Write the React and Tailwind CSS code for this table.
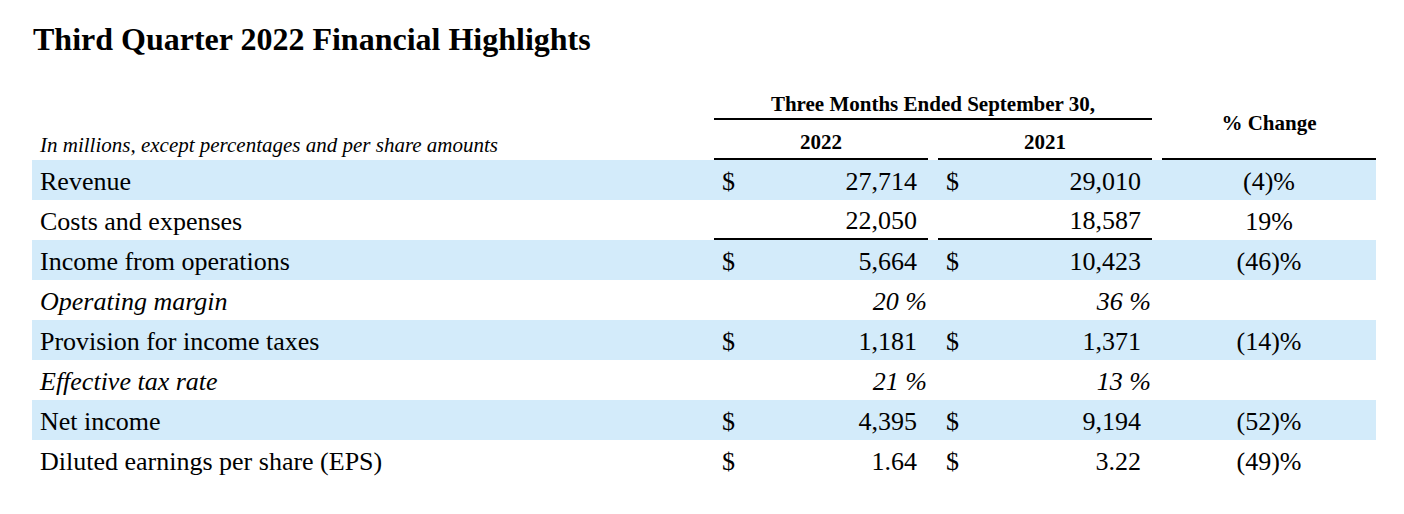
import React from "react";

const rows = [
  { label: "Revenue", a: "27,714", b: "29,010", chg: "(4)%", dollar: true, blue: true },
  { label: "Costs and expenses", a: "22,050", b: "18,587", chg: "19%", line: true },
  { label: "Income from operations", a: "5,664", b: "10,423", chg: "(46)%", dollar: true, blue: true },
  { label: "Operating margin", a: "20 %", b: "36 %", chg: "", italic: true },
  { label: "Provision for income taxes", a: "1,181", b: "1,371", chg: "(14)%", dollar: true, blue: true },
  { label: "Effective tax rate", a: "21 %", b: "13 %", chg: "", italic: true },
  { label: "Net income", a: "4,395", b: "9,194", chg: "(52)%", dollar: true, blue: true },
  { label: "Diluted earnings per share (EPS)", a: "1.64", b: "3.22", chg: "(49)%", dollar: true },
];

const ValueCell = ({ row, value }) => (
  <div
    className={`w-[214px] h-full flex items-center justify-between pl-[8px] pt-[3px] ${
      row.italic ? "pr-[1px] italic" : "pr-[11px]"
    } ${row.line ? "border-b-2 border-black" : ""}`}
  >
    <span>{row.dollar ? "$" : ""}</span>
    <span>{value}</span>
  </div>
);

export default function App() {
  return (
    <div className="w-[1404px] h-[514px] bg-white text-black font-['Liberation_Serif',serif]">
      <h1 className="pl-[33px] pt-[20px] h-[90px] text-[32px] font-bold leading-[38px]">
        Third Quarter 2022 Financial Highlights
      </h1>

      <div className="ml-[32px] w-[1344px]">
        {/* header */}
        <div className="flex h-[70px]">
          <div className="w-[682px] flex items-end pl-[8px] pb-[3px] italic text-[21px] leading-[24px]">
            In millions, except percentages and per share amounts
          </div>
          <div className="w-[438px] flex flex-col font-bold text-[21px]">
            <div className="h-[30px] flex items-center justify-center border-b-2 border-black leading-none">
              Three Months Ended September 30,
            </div>
            <div className="flex h-[40px]">
              <div className="w-[214px] flex items-end justify-center pb-[5px] border-b-2 border-black leading-none">
                2022
              </div>
              <div className="w-[10px]" />
              <div className="w-[214px] flex items-end justify-center pb-[5px] border-b-2 border-black leading-none">
                2021
              </div>
            </div>
          </div>
          <div className="w-[10px]" />
          <div className="w-[214px] flex items-center justify-center pb-[2px] border-b-2 border-black font-bold text-[21px] leading-none">
            % Change
          </div>
        </div>

        {/* body */}
        {rows.map((row, id) => (
          <div
            key={id}
            className={`flex h-[40px] items-center text-[26px] leading-none ${
              row.blue ? "bg-[#d3ebfa]" : ""
            }`}
          >
            <div className={`w-[682px] pl-[8px] pt-[3px] ${row.italic ? "italic" : ""}`}>
              {row.label}
            </div>
            <ValueCell row={row} value={row.a} />
            <div className="w-[10px]" />
            <ValueCell row={row} value={row.b} />
            <div className="w-[10px]" />
            <div className="w-[214px] pt-[3px] text-center">{row.chg}</div>
          </div>
        ))}
      </div>
    </div>
  );
}
